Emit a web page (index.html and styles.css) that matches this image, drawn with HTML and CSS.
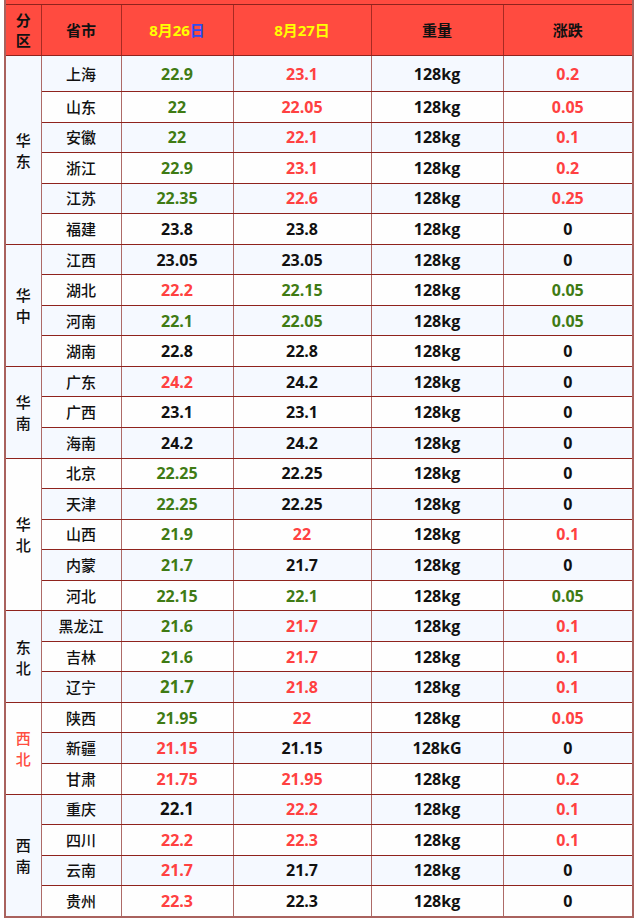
FILE: index.html
```html
<!DOCTYPE html>
<html lang="zh-CN">
<head>
<meta charset="utf-8">
<title>生猪价格</title>
<link rel="stylesheet" href="styles.css">
</head>
<body>
<div class="wrap">
<table class="price">
  <colgroup>
    <col class="c-zone"><col class="c-prov"><col class="c-d1"><col class="c-d2"><col class="c-w"><col class="c-chg">
  </colgroup>
  <thead>
    <tr class="cap"><td colspan="6"></td></tr>
    <tr class="head">
      <th class="zone-h">分区</th>
      <th>省市</th>
      <th class="yel">8月26<span class="blue">日</span></th>
      <th class="yel">8月27日</th>
      <th>重量</th>
      <th>涨跌</th>
    </tr>
  </thead>
  <tbody>
    <tr class="first"><td class="zone" rowspan="6">华东</td><td class="prov">上海</td><td class="g">22.9</td><td class="r">23.1</td><td>128kg</td><td class="r">0.2</td></tr>
    <tr><td class="prov">山东</td><td class="g">22</td><td class="r">22.05</td><td>128kg</td><td class="r">0.05</td></tr>
    <tr><td class="prov">安徽</td><td class="g">22</td><td class="r">22.1</td><td>128kg</td><td class="r">0.1</td></tr>
    <tr><td class="prov">浙江</td><td class="g">22.9</td><td class="r">23.1</td><td>128kg</td><td class="r">0.2</td></tr>
    <tr><td class="prov">江苏</td><td class="g">22.35</td><td class="r">22.6</td><td>128kg</td><td class="r">0.25</td></tr>
    <tr><td class="prov">福建</td><td>23.8</td><td>23.8</td><td>128kg</td><td>0</td></tr>

    <tr><td class="zone" rowspan="4">华中</td><td class="prov">江西</td><td>23.05</td><td>23.05</td><td>128kg</td><td>0</td></tr>
    <tr><td class="prov">湖北</td><td class="r">22.2</td><td class="g">22.15</td><td>128kg</td><td class="g">0.05</td></tr>
    <tr><td class="prov">河南</td><td class="g">22.1</td><td class="g">22.05</td><td>128kg</td><td class="g">0.05</td></tr>
    <tr><td class="prov">湖南</td><td>22.8</td><td>22.8</td><td>128kg</td><td>0</td></tr>

    <tr><td class="zone" rowspan="3">华南</td><td class="prov">广东</td><td class="r">24.2</td><td>24.2</td><td>128kg</td><td>0</td></tr>
    <tr><td class="prov">广西</td><td>23.1</td><td>23.1</td><td>128kg</td><td>0</td></tr>
    <tr><td class="prov">海南</td><td>24.2</td><td>24.2</td><td>128kg</td><td>0</td></tr>

    <tr><td class="zone" rowspan="5">华北</td><td class="prov">北京</td><td class="g">22.25</td><td>22.25</td><td>128kg</td><td>0</td></tr>
    <tr><td class="prov">天津</td><td class="g">22.25</td><td>22.25</td><td>128kg</td><td>0</td></tr>
    <tr><td class="prov">山西</td><td class="g">21.9</td><td class="r">22</td><td>128kg</td><td class="r">0.1</td></tr>
    <tr><td class="prov">内蒙</td><td class="g">21.7</td><td>21.7</td><td>128kg</td><td>0</td></tr>
    <tr><td class="prov">河北</td><td class="g">22.15</td><td class="g">22.1</td><td>128kg</td><td class="g">0.05</td></tr>

    <tr><td class="zone" rowspan="3">东北</td><td class="prov">黑龙江</td><td class="g">21.6</td><td class="r">21.7</td><td>128kg</td><td class="r">0.1</td></tr>
    <tr><td class="prov">吉林</td><td class="g">21.6</td><td class="r">21.7</td><td>128kg</td><td class="r">0.1</td></tr>
    <tr><td class="prov">辽宁</td><td class="g big">21.7</td><td class="r">21.8</td><td>128kg</td><td class="r">0.1</td></tr>

    <tr><td class="zone red" rowspan="3">西北</td><td class="prov">陕西</td><td class="g">21.95</td><td class="r">22</td><td>128kg</td><td class="r">0.05</td></tr>
    <tr><td class="prov">新疆</td><td class="r">21.15</td><td>21.15</td><td>128kG</td><td>0</td></tr>
    <tr><td class="prov">甘肃</td><td class="r">21.75</td><td class="r">21.95</td><td>128kg</td><td class="r">0.2</td></tr>

    <tr><td class="zone" rowspan="4">西南</td><td class="prov">重庆</td><td class="big">22.1</td><td class="r">22.2</td><td>128kg</td><td class="r">0.1</td></tr>
    <tr><td class="prov">四川</td><td class="r">22.2</td><td class="r">22.3</td><td>128kg</td><td class="r">0.1</td></tr>
    <tr><td class="prov">云南</td><td class="r">21.7</td><td>21.7</td><td>128kg</td><td>0</td></tr>
    <tr><td class="prov">贵州</td><td class="r">22.3</td><td>22.3</td><td>128kg</td><td>0</td></tr>
  </tbody>
</table>
</div>
</body>
</html>
```

FILE: styles.css
```css
html, body {
  margin: 0;
  padding: 0;
  background: #ffffff;
}

.wrap {
  padding-left: 4px;
}

.price {
  border-collapse: collapse;
  table-layout: fixed;
  width: 628px;
  border: 2px solid #a9625e;
  border-top: 0;
  font-family: "Open Sans", "Noto Sans CJK SC", sans-serif;
  font-weight: 700;
  font-size: 16px;
  color: #111111;
}

.c-zone { width: 36px; }
.c-prov { width: 80px; }
.c-d1 { width: 112px; }
.c-d2 { width: 138px; }
.c-w { width: 132px; }
.c-chg { width: 130px; }

.price td,
.price th {
  padding: 0;
  text-align: center;
  vertical-align: middle;
  border-left: 1px solid #ad6a67;
  border-right: 1px solid #ad6a67;
  border-top: 1px solid #8f231d;
  border-bottom: 1px solid #8f231d;
  height: 29.55px;
  line-height: 20px;
}

.price .cap td {
  height: 4px;
  background: #ff4b40;
  border-top: 0;
  border-left: 0;
  border-right: 0;
  line-height: 0;
}

.price .head th {
  height: 50px;
  background: #ff4b40;
  font-family: "Noto Sans CJK SC", sans-serif;
  font-size: 15px;
  font-weight: 700;
  color: #111111;
  border-left-color: #a82a22;
  border-right-color: #a82a22;
  border-top-color: #a82a22;
  border-bottom-color: #8f231d;
}

.price .head .yel {
  color: #ffff00;
  font-family: "Open Sans", "Noto Sans CJK SC", sans-serif;
}

.head .blue {
  color: #2b4df2;
  font-family: "Noto Sans CJK SC", sans-serif;
}

.price .head .zone-h {
  padding: 0 9px;
  line-height: 20px;
}

.price tbody tr:nth-child(odd) {
  background: #f5f9ff;
}

.price tbody tr:nth-child(even) {
  background: #fefefe;
}

.price tbody tr.first td {
  height: 35px;
}

.price td.zone {
  font-family: "Noto Sans CJK SC", sans-serif;
  font-size: 15px;
  font-weight: 500;
  padding: 0 9px;
  line-height: 21px;
}

.price td.zone.red {
  color: #ff4d40;
}

.price td.prov {
  font-family: "Noto Sans CJK SC", sans-serif;
  font-size: 15px;
  font-weight: 500;
}

.g { color: #3f7b14; }
.r { color: #ff4141; }

.price td.big {
  font-size: 17px;
}
```
